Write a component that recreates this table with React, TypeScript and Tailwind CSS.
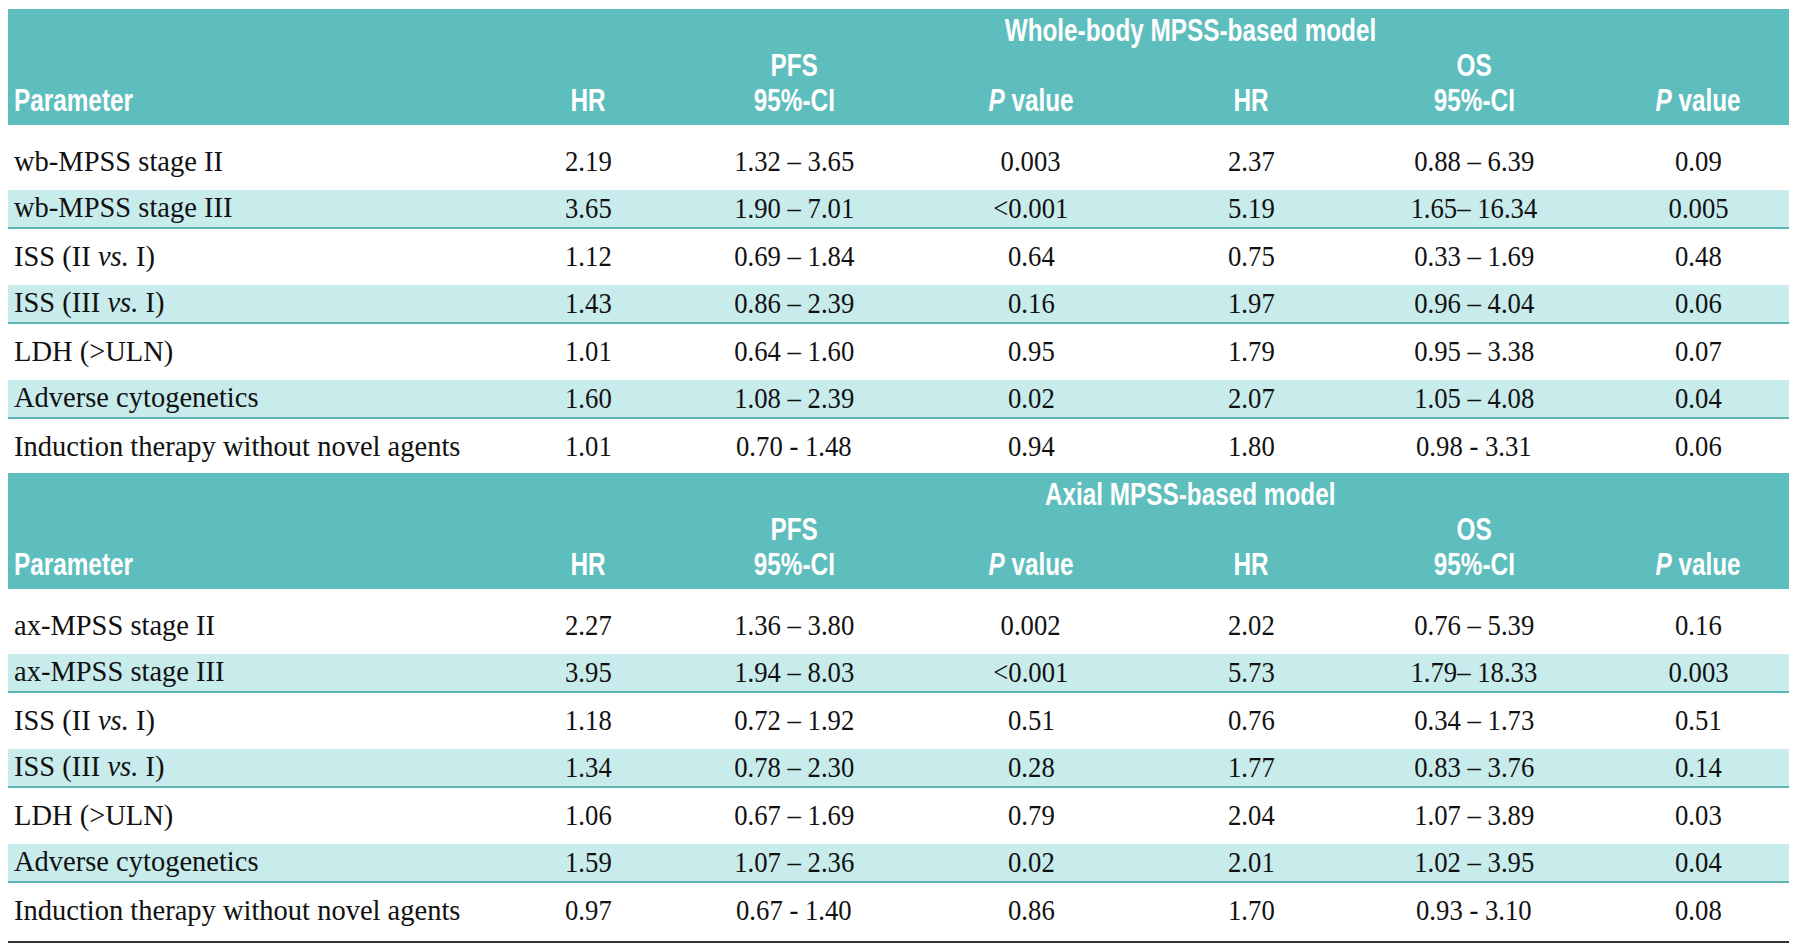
import React from 'react'

type Row = { label: React.ReactNode; v: string[] }

const wbRows: Row[] = [
  { label: 'wb-MPSS stage II', v: ['2.19', '1.32 – 3.65', '0.003', '2.37', '0.88 – 6.39', '0.09'] },
  { label: 'wb-MPSS stage III', v: ['3.65', '1.90 – 7.01', '<0.001', '5.19', '1.65– 16.34', '0.005'] },
  { label: <>ISS (II <i>vs.</i> I)</>, v: ['1.12', '0.69 – 1.84', '0.64', '0.75', '0.33 – 1.69', '0.48'] },
  { label: <>ISS (III <i>vs.</i> I)</>, v: ['1.43', '0.86 – 2.39', '0.16', '1.97', '0.96 – 4.04', '0.06'] },
  { label: 'LDH (>ULN)', v: ['1.01', '0.64 – 1.60', '0.95', '1.79', '0.95 – 3.38', '0.07'] },
  { label: 'Adverse cytogenetics', v: ['1.60', '1.08 – 2.39', '0.02', '2.07', '1.05 – 4.08', '0.04'] },
  { label: 'Induction therapy without novel agents', v: ['1.01', '0.70 - 1.48', '0.94', '1.80', '0.98 - 3.31', '0.06'] },
]

const axRows: Row[] = [
  { label: 'ax-MPSS stage II', v: ['2.27', '1.36 – 3.80', '0.002', '2.02', '0.76 – 5.39', '0.16'] },
  { label: 'ax-MPSS stage III', v: ['3.95', '1.94 – 8.03', '<0.001', '5.73', '1.79– 18.33', '0.003'] },
  { label: <>ISS (II <i>vs.</i> I)</>, v: ['1.18', '0.72 – 1.92', '0.51', '0.76', '0.34 – 1.73', '0.51'] },
  { label: <>ISS (III <i>vs.</i> I)</>, v: ['1.34', '0.78 – 2.30', '0.28', '1.77', '0.83 – 3.76', '0.14'] },
  { label: 'LDH (>ULN)', v: ['1.06', '0.67 – 1.69', '0.79', '2.04', '1.07 – 3.89', '0.03'] },
  { label: 'Adverse cytogenetics', v: ['1.59', '1.07 – 2.36', '0.02', '2.01', '1.02 – 3.95', '0.04'] },
  { label: 'Induction therapy without novel agents', v: ['0.97', '0.67 - 1.40', '0.86', '1.70', '0.93 - 3.10', '0.08'] },
]

const cols = 'grid grid-cols-[480px_200px_212px_262px_178px_268px_1fr]'
const head = "font-['Liberation_Sans',Arial,sans-serif] font-bold text-[32px] leading-[35px] text-white"

function H({ children, left }: { children: React.ReactNode; left?: boolean }) {
  return (
    <span className={`inline-block scale-x-[0.76] whitespace-nowrap ${left ? 'origin-left' : 'origin-center'}`}>
      {children}
    </span>
  )
}

function PVal() {
  return (
    <H>
      <i>P</i> value
    </H>
  )
}

function Header({ title, shift }: { title: string; shift: string }) {
  return (
    <div className={`bg-[#5ebdbd] pt-[4px] pb-[7px] ${head}`}>
      <div className={cols}>
        <div className={`col-start-2 col-span-6 text-center ${shift}`}>
          <H>{title}</H>
        </div>
      </div>
      <div className={cols}>
        <div className="col-start-3 text-center">
          <H>PFS</H>
        </div>
        <div className="col-start-6 text-center">
          <H>OS</H>
        </div>
      </div>
      <div className={cols}>
        <div className="pl-[6px]">
          <H left>Parameter</H>
        </div>
        <div className="text-center"><H>HR</H></div>
        <div className="text-center"><H>95%-CI</H></div>
        <div className="text-center"><PVal /></div>
        <div className="text-center"><H>HR</H></div>
        <div className="text-center"><H>95%-CI</H></div>
        <div className="text-center"><PVal /></div>
      </div>
    </div>
  )
}

function Body({ rows }: { rows: Row[] }) {
  return (
    <div className="mt-[12px]">
      {rows.map((r, i) => (
        <div key={i} className="h-[47.5px] pt-[5px] pb-[3px]">
          <div
            className={`${cols} h-full items-center ${
              i % 2 === 1 ? 'bg-[#c8ebeb] border-b-2 border-[#5db5b5]' : ''
            }`}
          >
            <div className="pl-[6px] whitespace-nowrap text-[28.5px]">{r.label}</div>
            {r.v.map((x, j) => (
              <div key={j} className="text-center whitespace-nowrap">
                <span className="inline-block scale-x-[0.92] origin-center">{x}</span>
              </div>
            ))}
          </div>
        </div>
      ))}
    </div>
  )
}

export default function App() {
  return (
    <div className="w-[1800px] h-[951px] bg-white overflow-hidden">
      <div className="ml-[8px] w-[1781px] pt-[9px] font-['Liberation_Serif','Times_New_Roman',serif] text-[29px] leading-none text-[#111]">
        <Header title="Whole-body MPSS-based model" shift="pl-[104px]" />
        <Body rows={wbRows} />
        <div className="mt-[3.5px]">
          <Header title="Axial MPSS-based model" shift="pl-[104px]" />
        </div>
        <Body rows={axRows} />
        <div className="mt-[7px] border-b-2 border-[#333]" />
      </div>
    </div>
  )
}
